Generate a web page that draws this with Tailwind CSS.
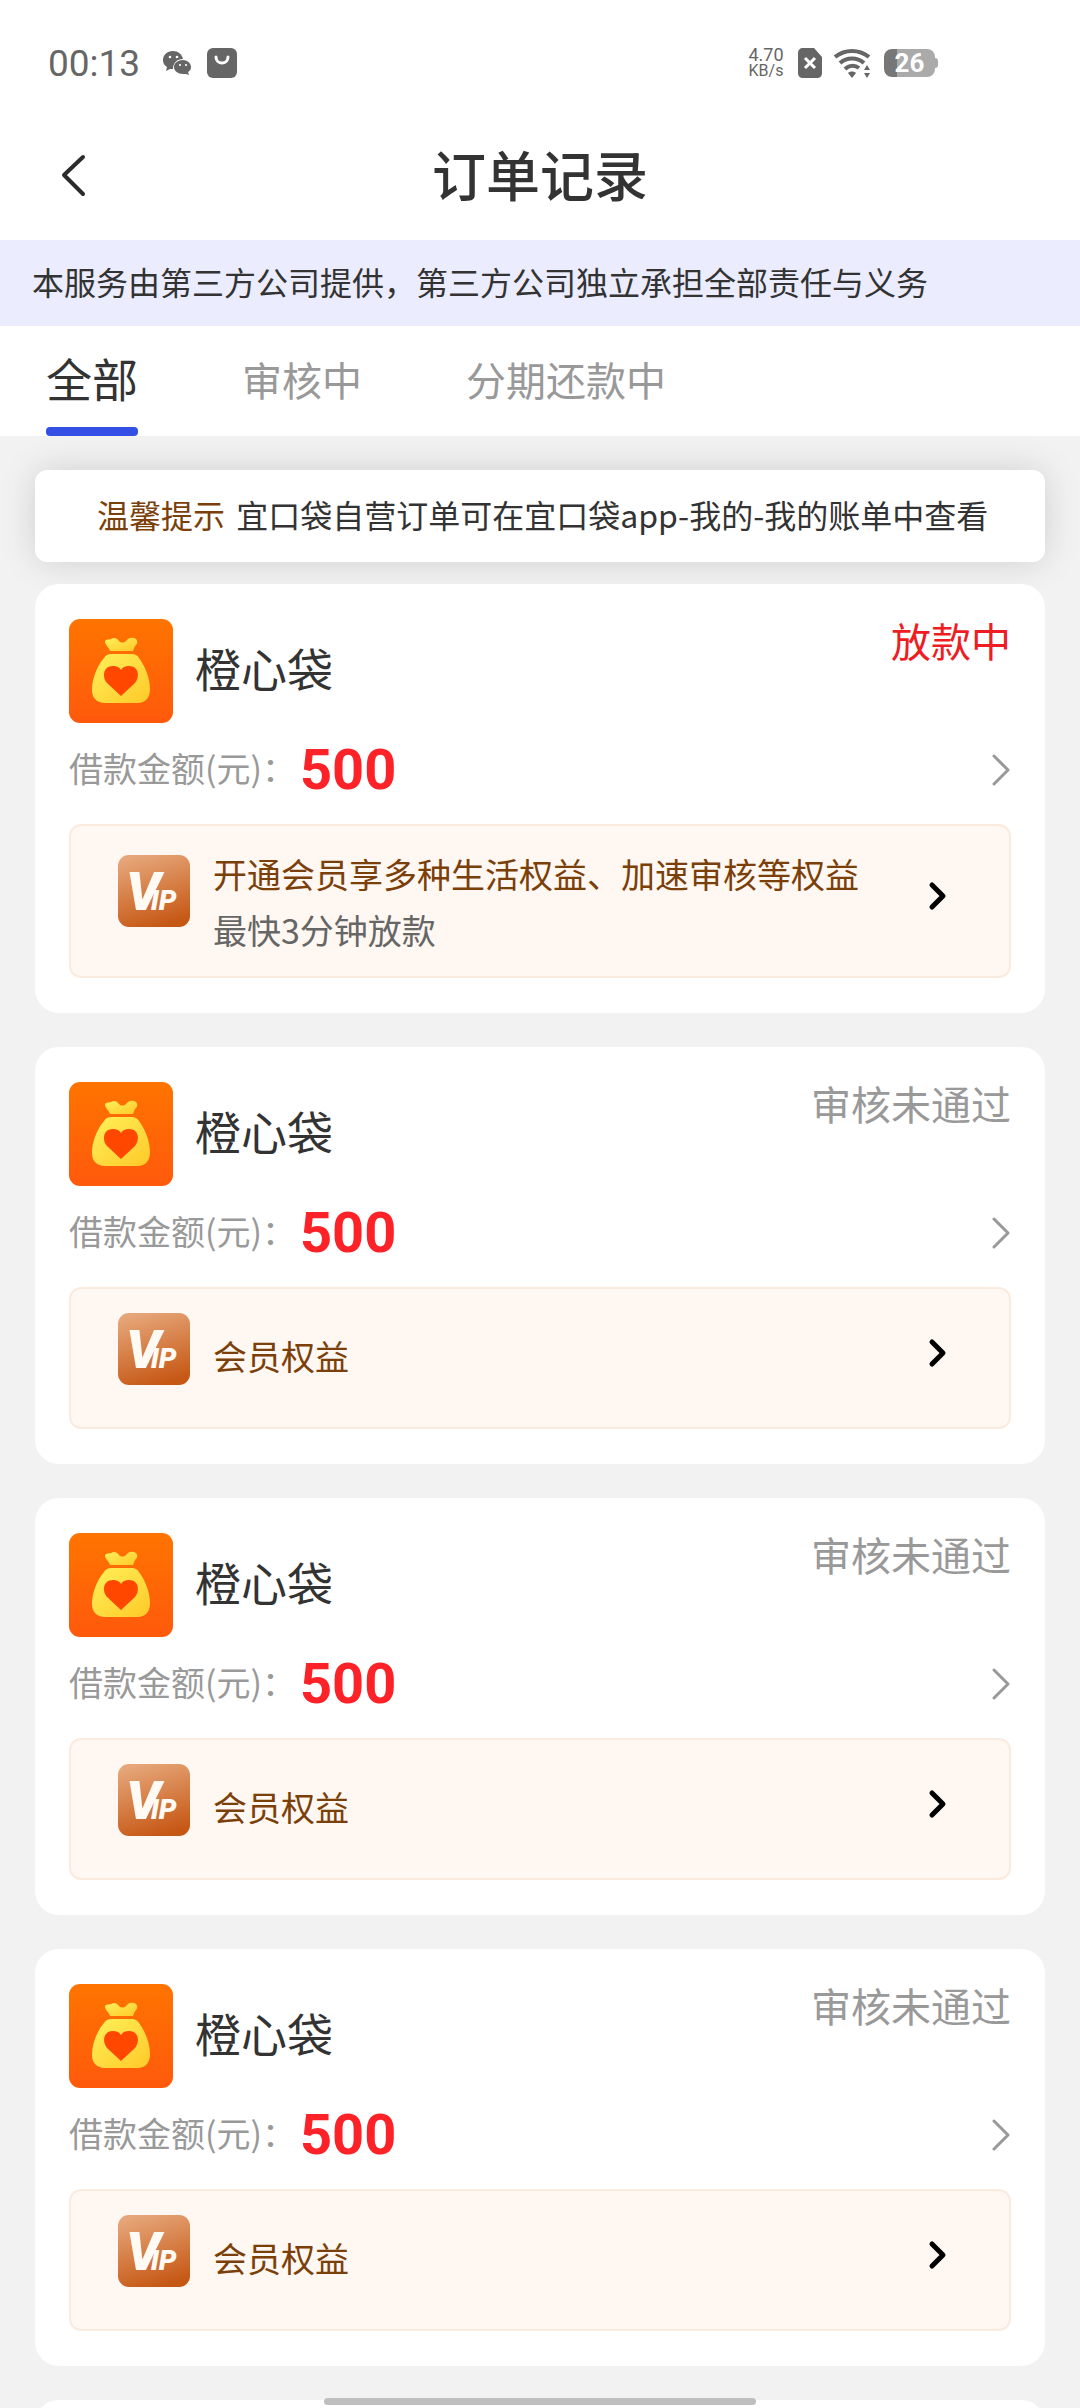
<!DOCTYPE html>
<html lang="zh-CN">
<head>
  <meta charset="UTF-8"/>
  <meta name="viewport" content="width=device-width, initial-scale=1.0"/>
  <title>订单记录</title>
  <script src="https://cdn.jsdelivr.net/npm/@tailwindcss/browser@4"></script>
</head>
<body class="relative flex h-screen flex-col overflow-hidden bg-[#f2f2f2] font-['Noto_Sans_CJK_SC',sans-serif] text-[#333]">
  <!-- Icons -->
  <svg class="absolute h-0 w-0" aria-hidden="true">
    <defs>
      <linearGradient id="g-orange" x1="0" y1="0" x2="0" y2="1">
        <stop offset="0" stop-color="#ff7400"/>
        <stop offset="1" stop-color="#ff590c"/>
      </linearGradient>
      <linearGradient id="g-bag" x1="0" y1="0" x2="1" y2="1">
        <stop offset="0" stop-color="#fff05a"/>
        <stop offset="1" stop-color="#ffc928"/>
      </linearGradient>
      <linearGradient id="g-vip" x1="0.3" y1="0" x2="0.6" y2="1">
        <stop offset="0" stop-color="#e6a679"/>
        <stop offset="1" stop-color="#c65714"/>
      </linearGradient>
    </defs>
    <symbol id="bag" viewBox="0 0 104 104">
      <rect width="104" height="104" rx="11" fill="url(#g-orange)"/>
      <path fill="url(#g-bag)" d="M41 32C40 28 36 26 36 23c0-3 3-2 6-3 3-2 6-1 8 2 2 2 5 2 7 0 2-3 5-4 8-3 4 1 4 5 2 7-2 2-2 4-3 6z"/>
      <path fill="url(#g-bag)" d="M42 35h21c3 0 5 1 7 4 6 8 11 20 11 31 0 9-5 14-12 14H36c-8 0-13-5-13-13 0-11 5-24 12-32 2-3 4-4 7-4z"/>
      <path fill="#ff4700" d="M52 77 38 64c-5-6-4-17 6-17 4 0 6 1 8 4 2-3 4-4 8-4 10 0 11 11 6 17z"/>
    </symbol>
  </svg>

  <!-- Status bar -->
  <div class="flex h-28 shrink-0 items-center bg-white pt-3.5 pl-12 font-[Roboto,sans-serif] text-[#666]">
    <span class="text-[37px] leading-none">00:13</span>
    <svg class="ml-[23px] h-7 w-7" viewBox="0 0 28 28" fill="currentColor">
      <path d="M10 2C4 2 0 6 0 11c0 3 1 5 4 7l-1 4 4-2 3 0c0-6 4-10 10-10C19 5 15 2 10 2z"/>
      <path d="M20 11c-5 0-9 3-9 7s4 7 9 7l3 0 3 1-1-3c2-1 3-3 3-5 0-4-4-7-8-7z"/>
      <g fill="#fff">
        <circle cx="7" cy="8" r="1.3"/><circle cx="14" cy="8" r="1.3"/>
        <circle cx="17" cy="16" r="1.1"/><circle cx="23" cy="16" r="1.1"/>
      </g>
    </svg>
    <svg class="ml-4 h-[30px] w-[30px]" viewBox="0 0 30 30">
      <rect width="30" height="30" rx="6" fill="currentColor"/>
      <path d="M9 9c0 8 12 8 12 0" fill="none" stroke="#fff" stroke-width="3" stroke-linecap="round"/>
    </svg>
    <div class="ml-auto w-10 text-center leading-none">
      <div class="text-[18px] leading-4">4.70</div>
      <div class="text-[16px] leading-4">KB/s</div>
    </div>
    <svg class="ml-3 h-[30px] w-6" viewBox="0 0 24 30">
      <path d="M5 0h11l8 9v16c0 3-2 5-5 5H5c-3 0-5-2-5-5V5c0-3 2-5 5-5z" fill="currentColor"/>
      <path d="M7 10l10 10M17 10l-10 10" stroke="#fff" stroke-width="3"/>
    </svg>
    <svg class="ml-3 h-[30px] w-9" viewBox="0 0 36 30" fill="none" stroke="currentColor" stroke-width="4">
      <path d="M1 9c10-8 24-8 34 0M6 15c7-6 17-6 24 0M11 21c4-4 10-4 14-1"/>
      <path d="M14 25c2-2 6-2 8 0l-4 5zM33 17l3 5h-6zM33 30l3-5h-6z" fill="currentColor" stroke="none"/>
    </svg>
    <div class="mr-[142px] ml-3.5 flex items-center">
      <div class="flex h-7 w-[51px] items-center justify-center rounded-lg bg-linear-to-r from-[#777] from-25% to-[#aaa] to-25% text-[26px] leading-none font-bold text-white">26</div>
      <div class="h-2.5 w-[3px] rounded-r bg-[#aaa]"></div>
    </div>
  </div>

  <!-- Header -->
  <header class="grid h-32 shrink-0 grid-cols-[1fr_auto_1fr] items-center bg-white px-[52px]">
    <button type="button" aria-label="返回" class="w-11">
      <svg class="h-11 w-11" viewBox="0 0 44 44" fill="none" stroke="#2b2b2b" stroke-width="4" stroke-linecap="round" stroke-linejoin="round">
        <path d="M31 3 12 21l19 19"/>
      </svg>
    </button>
    <h1 class="pb-1 text-[54px] leading-none font-medium">订单记录</h1>
  </header>

  <p class="flex h-[86px] shrink-0 items-center bg-[#ebecfd] px-8 pb-1 text-[32px] leading-none">本服务由第三方公司提供，第三方公司独立承担全部责任与义务</p>

  <!-- Tabs -->
  <nav class="flex h-[110px] shrink-0 gap-[104px] bg-white px-[46px] text-[40px] leading-none text-[#999]">
    <button type="button" class="relative pb-2 text-[46px] text-[#333]">全部<span class="absolute inset-x-0 bottom-0 h-[9px] rounded bg-[#344fe3]"></span></button>
    <button type="button" class="pb-1">审核中</button>
    <button type="button" class="pb-1">分期还款中</button>
  </nav>

  <!-- Orders -->
  <main class="min-h-0 flex-1 overflow-y-auto px-[35px] pt-[34px] [scrollbar-width:none]">
    <p class="mb-[22px] flex h-[92px] items-center rounded-xl bg-white px-[62px] pb-1 text-[32px] leading-none whitespace-pre shadow-[0_0_36px_rgba(0,0,0,0.14)]"><span class="mr-1 text-[#7b3f0a]">温馨提示</span> 宜口袋自营订单可在宜口袋app-我的-我的账单中查看</p>
    <div id="orders" class="flex flex-col gap-[34px]"></div>
    <!-- 下一页加载前的占位卡片 -->
    <div class="mt-[34px] h-[417px] rounded-3xl bg-white"></div>
  </main>

  <div class="absolute bottom-[3px] left-1/2 h-[7px] w-2/5 -translate-x-1/2 rounded-full bg-[#bfbfbf]"></div>

  <script>
    const orders = [
      { status: '放款中', lending: true },
      { status: '审核未通过' },
      { status: '审核未通过' },
      { status: '审核未通过' },
    ];

    const vipIcon = `
      <svg class="h-[72px] w-[72px]" viewBox="0 0 72 72">
        <rect width="72" height="72" rx="11" fill="url(#g-vip)"/>
        <text x="8" y="55" class="fill-[#fffaf3] font-[Roboto,sans-serif] text-[54px] font-black italic">V<tspan dx="-10" class="text-[28px]">IP</tspan></text>
      </svg>`;

    const vipArrow = `
      <svg class="h-8 w-8" viewBox="0 0 32 32" fill="none" stroke="#000" stroke-width="5" stroke-linecap="round" stroke-linejoin="round">
        <path d="M11 5l11 11-11 11"/>
      </svg>`;

    // 放款中的订单显示加速文案，其余只显示会员权益
    const vipLending = `
      <a href="#" class="flex h-[154px] items-start rounded-xl border-2 border-[#fbeade] bg-[#fff7f1] pt-5 pr-[56px] pl-[47px] text-[34px] leading-[56px]">
        <div class="mt-[9px]">${vipIcon}</div>
        <div class="ml-[23px] flex-1">
          <p class="text-[#7b3f0a]">开通会员享多种生活权益、加速审核等权益</p>
          <p class="text-[#666]">最快3分钟放款</p>
        </div>
        <div class="mt-[34px]">${vipArrow}</div>
      </a>`;
    const vipNormal = `
      <a href="#" class="flex h-[142px] items-start rounded-xl border-2 border-[#fbeade] bg-[#fff7f1] pt-6 pr-[56px] pl-[47px] text-[34px] leading-[56px]">
        <div>${vipIcon}</div>
        <p class="mt-[15px] ml-[23px] flex-1 text-[#7b3f0a]">会员权益</p>
        <div class="mt-6">${vipArrow}</div>
      </a>`;

    document.getElementById('orders').innerHTML = orders.map(order => `
      <section class="rounded-3xl bg-white px-[34px] py-[35px]">
        <div class="flex items-center">
          <svg class="h-[104px] w-[104px]"><use href="#bag"/></svg>
          <h2 class="ml-[22px] pb-2 text-[46px] leading-none">橙心袋</h2>
          <span class="ml-auto self-start text-[40px] leading-[42px] ${order.lending ? 'text-[#ee1d23]' : 'text-[#999]'}">${order.status}</span>
        </div>
        <div class="flex h-[101px] items-center pb-[7px]">
          <span class="pb-1 text-[34px] leading-none text-[#999]">借款金额(元)：</span>
          <span class="ml-1 font-[Roboto,sans-serif] text-[56px] leading-none font-bold text-[#fc2228]">500</span>
          <svg class="ml-auto h-8 w-5" viewBox="0 0 20 32" fill="none" stroke="#999" stroke-width="3" stroke-linecap="round" stroke-linejoin="round">
            <path d="M3 2l14 14L3 30"/>
          </svg>
        </div>
        ${order.lending ? vipLending : vipNormal}
      </section>`).join('');
  </script>
</body>
</html>
